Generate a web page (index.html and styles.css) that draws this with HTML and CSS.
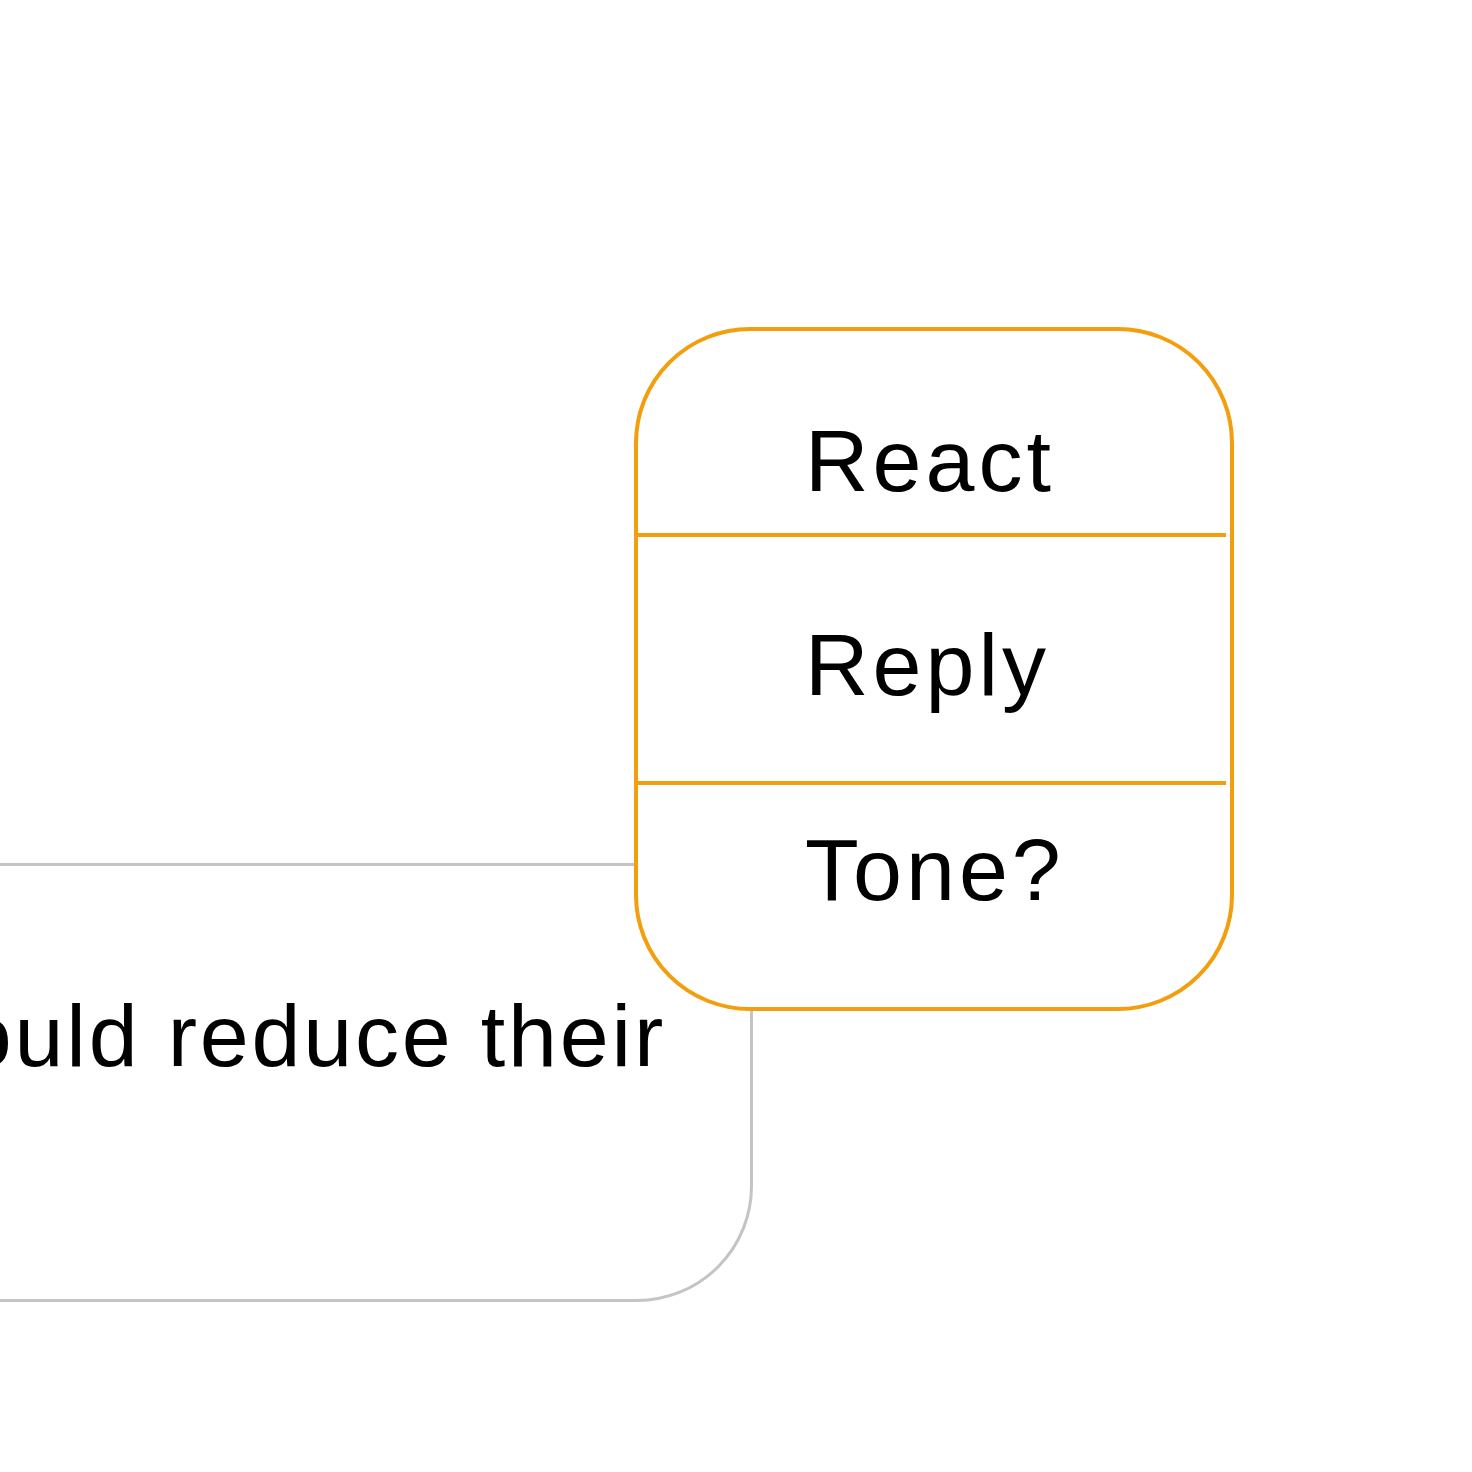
FILE: index.html
```html
<!DOCTYPE html>
<html lang="en">
<head>
<meta charset="utf-8">
<title>Message actions</title>
<link rel="stylesheet" href="styles.css">
</head>
<body>
<main class="stage">
  <div class="bubble">
    <p class="bubble-text">Changing the plan this late would reduce their</p>
  </div>
  <div class="menu" role="menu">
    <div class="menu-item menu-item--first" role="menuitem">React</div>
    <div class="menu-divider"></div>
    <div class="menu-item menu-item--middle" role="menuitem">Reply</div>
    <div class="menu-divider"></div>
    <div class="menu-item menu-item--last" role="menuitem">Tone?</div>
  </div>
</main>
</body>
</html>
```
FILE: styles.css
```css
html, body {
  margin: 0;
  padding: 0;
  background: #ffffff;
}

.stage {
  position: relative;
  width: 1472px;
  height: 1472px;
  overflow: hidden;
  padding-top: 863px;
  box-sizing: border-box;
  font-family: "Liberation Sans", Arial, sans-serif;
  color: #000000;
}

.bubble {
  box-sizing: border-box;
  width: 1553px;
  margin-left: -800px;
  height: 439px;
  border: 3px solid #c4c4c4;
  border-radius: 116px;
  display: flex;
  justify-content: flex-end;
  padding: 120px 84px 0 0;
  background: #ffffff;
}

.bubble-text {
  margin: 0;
  flex: none;
  white-space: nowrap;
  font-size: 88px;
  line-height: 100px;
  letter-spacing: 2.8px;
}

.menu {
  position: absolute;
  left: 634px;
  top: 327px;
  width: 600px;
  box-sizing: border-box;
  border: 4px solid #f39e0c;
  border-radius: 116px;
  background: #ffffff;
  display: flex;
  flex-direction: column;
}

.menu-item {
  font-size: 88px;
  line-height: 100px;
  letter-spacing: 4px;
  padding-left: 167px;
  white-space: nowrap;
}

.menu-item--first {
  padding-top: 80px;
  padding-bottom: 22px;
}

.menu-item--middle {
  padding-top: 78px;
  padding-bottom: 66px;
}

.menu-item--last {
  padding-top: 35px;
  padding-bottom: 87px;
}

.menu-divider {
  height: 4px;
  margin-right: 4px;
  background: #f39e0c;
}
```
